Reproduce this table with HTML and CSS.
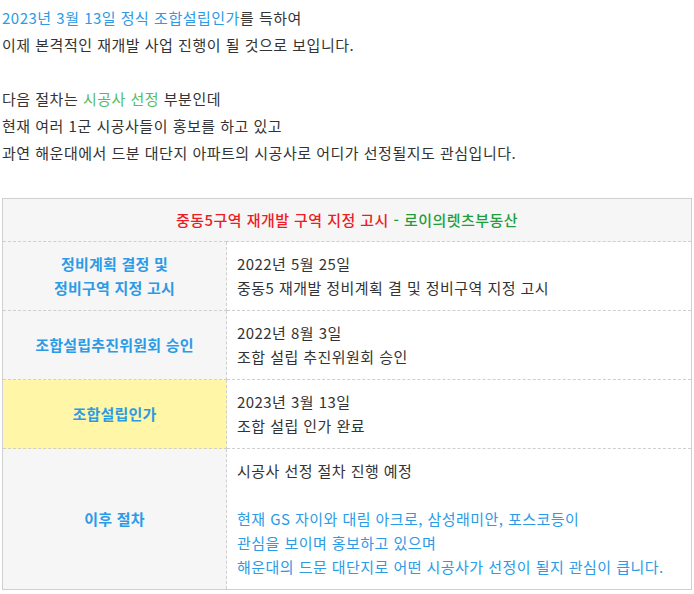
FILE: index.html
```html
<!DOCTYPE html>
<html lang="ko">
<head>
<meta charset="utf-8">
<link rel="stylesheet" href="styles.css">
</head>
<body>
<div class="intro">
  <p><span class="blue">2023년 3월 13일 정식 조합설립인가</span>를 득하여<br>이제 본격적인 재개발 사업 진행이 될 것으로 보입니다.</p>
  <p class="gap"><br></p>
  <p>다음 절차는 <span class="green">시공사 선정</span> 부분인데<br>현재 여러 1군 시공사들이 홍보를 하고 있고<br>과연 해운대에서 드분 대단지 아파트의 시공사로 어디가 선정될지도 관심입니다.</p>
</div>
<table class="info">
  <tr>
    <th colspan="2" class="head"><span class="red">중동5구역 재개발 구역 지정 고시</span> <span class="dgreen">- 로이의렛츠부동산</span></th>
  </tr>
  <tr>
    <td class="label">정비계획 결정 및<br>정비구역 지정 고시</td>
    <td class="val">2022년 5월 25일<br>중동5 재개발 정비계획 결 및 정비구역 지정 고시</td>
  </tr>
  <tr>
    <td class="label">조합설립추진위원회 승인</td>
    <td class="val">2022년 8월 3일<br>조합 설립 추진위원회 승인</td>
  </tr>
  <tr>
    <td class="label yellow">조합설립인가</td>
    <td class="val">2023년 3월 13일<br>조합 설립 인가 완료</td>
  </tr>
  <tr>
    <td class="label">이후 절차</td>
    <td class="val">시공사 선정 절차 진행 예정<br><br><span class="blue">현재 GS 자이와 대림 아크로, 삼성래미안, 포스코등이<br>관심을 보이며 홍보하고 있으며<br>해운대의 드문 대단지로 어떤 시공사가 선정이 될지 관심이 큽니다.</span></td>
  </tr>
</table>
</body>
</html>
```
FILE: styles.css
```css
html, body {
  margin: 0;
  padding: 0;
  background: #fff;
}
body {
  font-family: "Noto Sans CJK KR", "Noto Sans", sans-serif;
  font-size: 15px;
  color: #333;
}
.intro {
  padding: 4px 2px 0 2px;
  line-height: 27px;
  letter-spacing: 0.5px;
}
.intro p {
  margin: 0;
}
.blue { color: #2b9be6; }
.green { color: #55bb6a; }
.red { color: #ee1c25; }
.dgreen { color: #1f9e3c; }
.info {
  margin: 32px 2px 0 2px;
  width: 690px;
  border-collapse: collapse;
  border: 1px solid #cfcfcf;
  line-height: 24px;
  letter-spacing: 0.45px;
}
.info td, .info th {
  border: 1px dashed #cfcfcf;
}
.head {
  background: #f6f6f6;
  height: 42px;
  padding: 0;
  text-align: center;
  font-weight: 500;
}
.label {
  width: 203px;
  background: #f6f6f6;
  color: #2b9be6;
  font-weight: bold;
  text-align: center;
  padding: 10px;
  letter-spacing: 0.2px;
}
.label.yellow {
  background: #fff6a8;
}
.val {
  padding: 10px;
  vertical-align: middle;
}
```
